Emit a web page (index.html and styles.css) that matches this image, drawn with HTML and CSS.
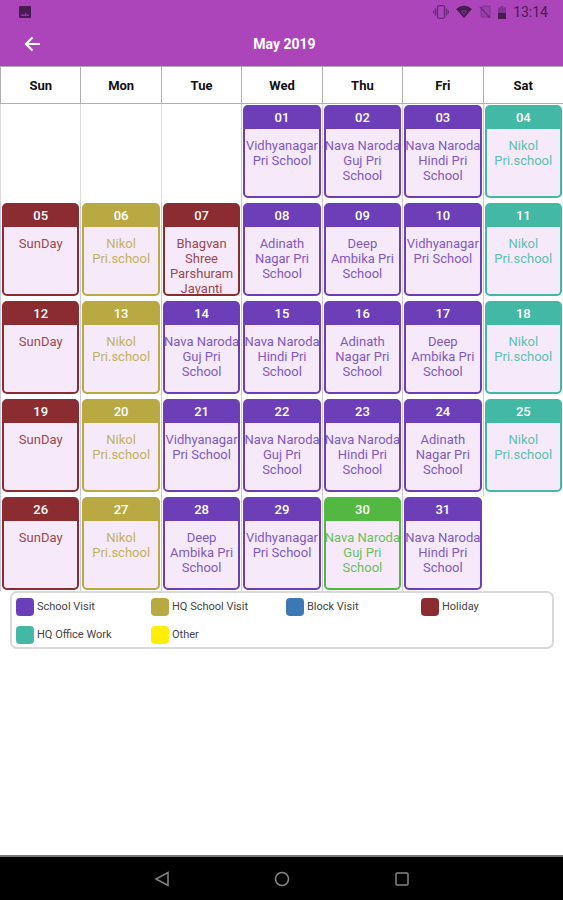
FILE: index.html
```html
<!DOCTYPE html>
<html lang="en">
<head>
<meta charset="utf-8">
<meta name="viewport" content="width=device-width, initial-scale=1">
<title>May 2019</title>
<link rel="stylesheet" href="styles.css">
</head>
<body>
<header class="top">
  <div class="status">
    <svg class="photo" width="12" height="12" viewBox="0 0 12 12"><rect width="12" height="12" rx="1" fill="#481b51"/><path d="M2 10V9l2-1.500L5 9l2-2.500L8 9l1-1 1 1v1z" fill="#8c3a9b"/></svg>
    <div class="status-right">
      <svg width="16" height="16" viewBox="0 0 16 16" fill="none" stroke="#6b2878" stroke-width="1.3"><rect x="4.500" y="1.700" width="7" height="12.600" rx="1.500"/><path d="M2.500 4.500v7M13.500 4.500v7M.7 6.500v3M15.300 6.500v3"/></svg>
      <svg width="16" height="16" viewBox="0 0 16 16"><path d="M0 5q8-7 16 0L8 14z" fill="#481b51"/><path d="M5.500 7.500q2.500-2 5 0L8 10.500z" fill="none" stroke="#8c3a9b"/></svg>
      <svg width="12" height="14" viewBox="0 0 12 14"><path d="M4 1h7v11H2V4z" fill="#9a3fa9" stroke="#81348f"/><path d="M1 2l10 11" stroke="#702a7d" stroke-width="1.400"/></svg>
      <svg class="battery" width="8" height="13" viewBox="0 0 8 13"><path d="M2.500 0h3v1.500H8V7H0V1.500h2.500z" fill="#81348f"/><path d="M0 7h8v6H0z" fill="#481b51"/></svg>
      <span>13:14</span>
    </div>
  </div>
  <div class="bar">
    <button class="back" type="button" aria-label="Back"><svg width="16" height="16" viewBox="0 0 16 16" fill="none" stroke="#fff" stroke-width="2.200"><path d="M16 8H2M8.500 1.500L2 8l6.500 6.500"/></svg></button>
    <h1>May 2019</h1>
  </div>
</header>
<main>
<table class="calendar">
<thead><tr><th>Sun</th><th>Mon</th><th>Tue</th><th>Wed</th><th>Thu</th><th>Fri</th><th>Sat</th></tr></thead>
<tbody>
<tr>
<td class="empty"></td><td class="empty"></td><td class="empty"></td>
<td><div class="day visit"><b>01</b><p>Vidhyanagar<br>Pri School</p></div></td>
<td><div class="day visit"><b>02</b><p>Nava Naroda<br>Guj Pri<br>School</p></div></td>
<td><div class="day visit"><b>03</b><p>Nava Naroda<br>Hindi Pri<br>School</p></div></td>
<td><div class="day office"><b>04</b><p>Nikol<br>Pri.school</p></div></td>
</tr>
<tr>
<td><div class="day holiday"><b>05</b><p>SunDay</p></div></td>
<td><div class="day hq"><b>06</b><p>Nikol<br>Pri.school</p></div></td>
<td><div class="day holiday"><b>07</b><p>Bhagvan<br>Shree<br>Parshuram<br>Jayanti</p></div></td>
<td><div class="day visit"><b>08</b><p>Adinath<br>Nagar Pri<br>School</p></div></td>
<td><div class="day visit"><b>09</b><p>Deep<br>Ambika Pri<br>School</p></div></td>
<td><div class="day visit"><b>10</b><p>Vidhyanagar<br>Pri School</p></div></td>
<td><div class="day office"><b>11</b><p>Nikol<br>Pri.school</p></div></td>
</tr>
<tr>
<td><div class="day holiday"><b>12</b><p>SunDay</p></div></td>
<td><div class="day hq"><b>13</b><p>Nikol<br>Pri.school</p></div></td>
<td><div class="day visit"><b>14</b><p>Nava Naroda<br>Guj Pri<br>School</p></div></td>
<td><div class="day visit"><b>15</b><p>Nava Naroda<br>Hindi Pri<br>School</p></div></td>
<td><div class="day visit"><b>16</b><p>Adinath<br>Nagar Pri<br>School</p></div></td>
<td><div class="day visit"><b>17</b><p>Deep<br>Ambika Pri<br>School</p></div></td>
<td><div class="day office"><b>18</b><p>Nikol<br>Pri.school</p></div></td>
</tr>
<tr>
<td><div class="day holiday"><b>19</b><p>SunDay</p></div></td>
<td><div class="day hq"><b>20</b><p>Nikol<br>Pri.school</p></div></td>
<td><div class="day visit"><b>21</b><p>Vidhyanagar<br>Pri School</p></div></td>
<td><div class="day visit"><b>22</b><p>Nava Naroda<br>Guj Pri<br>School</p></div></td>
<td><div class="day visit"><b>23</b><p>Nava Naroda<br>Hindi Pri<br>School</p></div></td>
<td><div class="day visit"><b>24</b><p>Adinath<br>Nagar Pri<br>School</p></div></td>
<td><div class="day office"><b>25</b><p>Nikol<br>Pri.school</p></div></td>
</tr>
<tr>
<td><div class="day holiday"><b>26</b><p>SunDay</p></div></td>
<td><div class="day hq"><b>27</b><p>Nikol<br>Pri.school</p></div></td>
<td><div class="day visit"><b>28</b><p>Deep<br>Ambika Pri<br>School</p></div></td>
<td><div class="day visit"><b>29</b><p>Vidhyanagar<br>Pri School</p></div></td>
<td><div class="day today"><b>30</b><p>Nava Naroda<br>Guj Pri<br>School</p></div></td>
<td><div class="day visit"><b>31</b><p>Nava Naroda<br>Hindi Pri<br>School</p></div></td>
<td class="blank"></td>
</tr>
</tbody>
</table>
<ul class="legend">
<li><i class="visit"></i>School Visit</li>
<li><i class="hq"></i>HQ School Visit</li>
<li><i class="block"></i>Block Visit</li>
<li><i class="holiday"></i>Holiday</li>
<li><i class="office"></i>HQ Office Work</li>
<li><i class="other"></i>Other</li>
</ul>
</main>
<nav class="system">
<button type="button" aria-label="Back"><svg width="16" height="16" viewBox="0 0 16 16"><path d="M14 1.500v13L2 8z"/></svg></button>
<button type="button" aria-label="Home"><svg width="16" height="16" viewBox="0 0 16 16"><circle cx="8" cy="8" r="6.500"/></svg></button>
<button type="button" aria-label="Recent apps"><svg width="16" height="16" viewBox="0 0 16 16"><rect x="2" y="2" width="12" height="12" rx="1"/></svg></button>
</nav>
</body>
</html>
```

FILE: styles.css
```css
* { box-sizing: border-box; }
body {
  margin: 0;
  min-height: 100vh;
  display: flex;
  flex-direction: column;
  background: #fff;
  color: #111;
  font-family: Roboto, "Liberation Sans", sans-serif;
}
button { padding: 0; border: 0; background: none; display: flex; }
.top { background: #ab45b9; height: 66px; }
.status {
  height: 24px;
  padding: 0 15px 0 19px;
  display: flex;
  align-items: center;
  justify-content: space-between;
}
.status-right {
  display: flex;
  align-items: center;
  gap: 7px;
  color: #481b51;
  font-size: 14px;
  line-height: 24px;
}
.bar {
  height: 40px;
  padding: 0 24px;
  display: grid;
  grid-template-columns: 16px 1fr 10px;
  align-items: center;
}
.bar h1 {
  margin: 0;
  color: #fff;
  font-size: 14px;
  line-height: 20px;
  font-weight: 700;
  text-align: center;
}
.calendar {
  width: 100%;
  table-layout: fixed;
  border-collapse: separate;
  border-spacing: 0;
}
th {
  height: 38px;
  padding: 0;
  border: solid #b0b0b0;
  border-width: 1px 0 1px 1px;
  font-size: 13px;
  font-weight: 700;
}
td {
  height: 98px;
  padding: 1px 1px 4px 1px;
  border-left: 1px solid #cfc8d6;
  vertical-align: top;
}
.empty { border-left-color: #ddd; }
.blank { border-color: #fff; }
tr:last-child td { height: 95px; padding-bottom: 1px; }
.day {
  height: 93px;
  border: 2px solid var(--c);
  border-radius: 5px;
  background: #f6eafa;
  color: var(--c);
  text-align: center;
}
.day b {
  display: block;
  height: 22px;
  background: var(--c);
  color: #fff;
  font-size: 13px;
  line-height: 22px;
  font-weight: 500;
}
.day p {
  margin: 9px 0 0;
  display: flex;
  justify-content: center;
  font-size: 13px;
  line-height: 15px;
  white-space: nowrap;
  opacity: 0.85;
}
.visit { --c: #6c3fb9; }
.office { --c: #43b9a5; }
.holiday { --c: #8b2c30; }
.hq { --c: #b9a943; }
.today { --c: #52b841; }
.block { --c: #3d78b4; }
.other { --c: #ffee07; }
.legend {
  list-style: none;
  margin: 0 9px 0 10px;
  padding: 4px 0 3px;
  border: 2px solid #d9d9d9;
  border-radius: 7px;
  display: grid;
  grid-template-columns: repeat(4, 1fr);
  row-gap: 9px;
}
.legend li {
  display: flex;
  align-items: center;
  gap: 3px;
  height: 19px;
  padding-left: 4px;
  font-size: 11px;
  color: #444;
}
.legend i {
  width: 18px;
  height: 18px;
  border-radius: 4px;
  background: var(--c);
}
.system {
  height: 45px;
  margin-top: auto;
  border-top: 2px solid #777;
  background: #000;
  display: flex;
  align-items: center;
  justify-content: center;
  gap: 104px;
}
.system svg { fill: none; stroke: #858585; stroke-width: 1.5; }
```
